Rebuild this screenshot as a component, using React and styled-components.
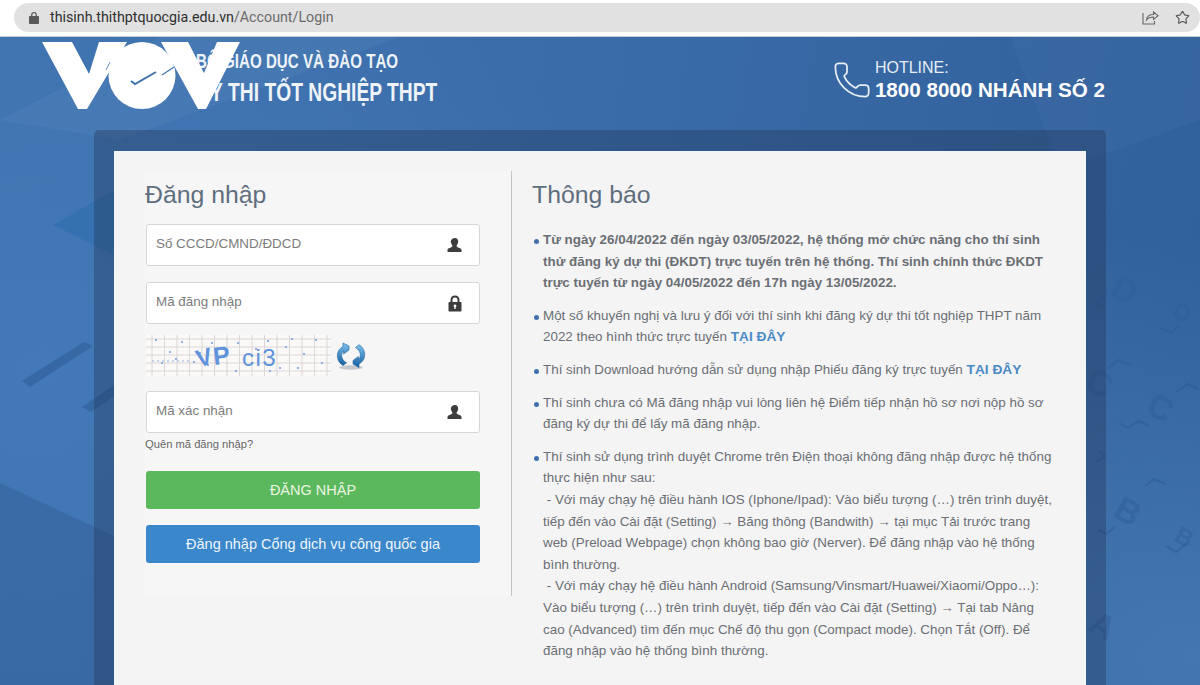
import React from "react";
import styled, { createGlobalStyle } from "styled-components";
import { Phone, Star } from "lucide-react";

const GlobalStyle = createGlobalStyle`
  html, body {
    margin: 0;
    padding: 0;
    height: 100%;
    overflow: hidden;
    font-family: "Liberation Sans", Arial, sans-serif;
  }
  * { box-sizing: border-box; }
`;

const notices = [
  {
    bold: true,
    text: "Từ ngày 26/04/2022 đến ngày 03/05/2022, hệ thống mở chức năng cho thí sinh thử đăng ký dự thi (ĐKDT) trực tuyến trên hệ thống. Thí sinh chính thức ĐKDT trực tuyến từ ngày 04/05/2022 đến 17h ngày 13/05/2022.",
  },
  {
    text: "Một số khuyến nghị và lưu ý đối với thí sinh khi đăng ký dự thi tốt nghiệp THPT năm 2022 theo hình thức trực tuyến ",
    link: "TẠI ĐÂY",
  },
  {
    text: "Thí sinh Download hướng dẫn sử dụng nhập Phiếu đăng ký trực tuyến ",
    link: "TẠI ĐÂY",
  },
  {
    text: "Thí sinh chưa có Mã đăng nhập vui lòng liên hệ Điểm tiếp nhận hồ sơ nơi nộp hồ sơ đăng ký dự thi để lấy mã đăng nhập.",
  },
];

const UserIcon = () => (
  <svg width="16" height="16" viewBox="0 0 16 16">
    <path
      fill="#3c3c3c"
      d="M8 1c2 0 3.200 1.500 3.200 3.600 0 1.500-.7 2.900-1.500 3.600v1.100c0 .6 1 1 2.200 1.500 1.300.5 2.600 1 2.600 2.200V15H.5v-2c0-1.200 1.300-1.700 2.600-2.200 1.200-.5 2.200-.9 2.200-1.500V8.200C4.500 7.500 3.800 6.100 3.800 4.600 3.800 2.500 6 1 8 1z"
    />
  </svg>
);

const LockIcon = () => (
  <svg width="16" height="17" viewBox="0 0 16 17">
    <path
      fill="#3c3c3c"
      fillRule="evenodd"
      d="M8 .5c2.800 0 4.500 1.900 4.500 4.500v2h1c.6 0 1 .4 1 1v7.500c0 .6-.4 1-1 1h-11c-.6 0-1-.4-1-1V8c0-.6.4-1 1-1h1V5C3.500 2.400 5.200.5 8 .5zM8 2.500c-1.600 0-2.500 1-2.500 2.600V7h5V5.100c0-1.600-.9-2.600-2.500-2.600zM8 9.500a1.400 1.400 0 0 0-.7 2.600V14h1.400v-1.900A1.400 1.400 0 0 0 8 9.500z"
    />
  </svg>
);

const BarLockIcon = () => (
  <svg width="10" height="12" viewBox="0 0 10 12">
    <path
      fill="#5a5a5a"
      fillRule="evenodd"
      d="M5 0c1.700 0 2.900 1.200 2.900 2.900V4H9c.5 0 1 .4 1 1v6c0 .6-.5 1-1 1H1c-.5 0-1-.4-1-1V5c0-.6.5-1 1-1h1.100V2.900C2.100 1.200 3.300 0 5 0zm0 1.300c-1 0-1.600.6-1.600 1.600V4h3.200V2.900c0-1-.6-1.600-1.600-1.600z"
    />
  </svg>
);

const ShareIcon = () => (
  <svg width="17" height="15" viewBox="0 0 17 15" fill="none" stroke="#666" strokeWidth="1.100">
    <path d="M1 3v11h11.500v-3" />
    <path d="M4.500 10c.4-3.500 3-5.500 7-5.500V2l4.500 3.700-4.500 3.700V7c-3 0-5.300.8-7 3z" />
  </svg>
);

const RefreshIcon = () => (
  <svg width="30" height="28" viewBox="0 0 30 28">
    <defs>
      <linearGradient id="refreshBlue" x1="0" y1="0" x2="0" y2="1">
        <stop offset="0" stopColor="#7cc0ee" />
        <stop offset="1" stopColor="#14609f" />
      </linearGradient>
    </defs>
    <ellipse cx="15" cy="25.500" rx="12" ry="2.200" fill="#c4c8cc" />
    <path
      fill="url(#refreshBlue)"
      stroke="#1c639f"
      strokeWidth=".6"
      d="M13 4 7 1v3.500C2.600 7 .8 11 1.500 15.500c.5 3.400 2.500 6.300 5.500 8l3.500-2.700C7 19 5.500 16 5.700 13c.1-1.900.8-3.300 1.900-4.300V12L13 8z"
    />
    <path
      fill="url(#refreshBlue)"
      stroke="#1c639f"
      strokeWidth=".6"
      d="M17 22l6 3.500V22c4.400-2.500 6.200-6.500 5.500-11-.5-3.700-2.500-6.600-5.500-8.300L19.500 5.500C23 7.400 24.500 10.500 24.300 13.500c-.1 1.900-.8 3.300-1.900 4.300v-3.300L17 18.500z"
    />
  </svg>
);

const VovLogo = () => (
  <Logo width="200" height="69" viewBox="41 41 200 69">
    <g fill="#fff">
      <polygon points="42,42 72,42 89,74 99,42 127,42 87,109 78,109" />
      <circle cx="142" cy="75.500" r="33.500" />
      <polygon points="161,42 188,42 204,73 217,42 240,42 206,109 198,109" />
    </g>
    <g fill="none" stroke="#3f72ad">
      <path d="M131 81l4 3 21-12" strokeWidth="2" />
      <path d="M162 75l12-8" strokeWidth="1.200" />
      <path d="M110 62l-4 8M108 84l-4 14" strokeWidth=".8" />
    </g>
  </Logo>
);

const dots = [
  [10, 5], [24, 17], [36, 7], [48, 27], [66, 8], [72, 22], [92, 8], [90, 36], [110, 14],
  [122, 6], [128, 25], [146, 4], [152, 33], [158, 19], [170, 5], [176, 28], [140, 12], [30, 24],
  [54, 18], [16, 28], [62, 30], [124, 36], [102, 30], [134, 33],
];

const Captcha = () => (
  <CaptchaBox width="185" height="41" viewBox="0 0 185 41">
    <rect width="185" height="41" fill="#fbf8f8" />
    {[...Array(15).keys()].map((i) => (
      <line key={`v${i}`} x1={6 + i * 12.500} y1="0" x2={6 + i * 12.500} y2="41" stroke="#dcd6d6" />
    ))}
    {[...Array(5).keys()].map((i) => (
      <line key={`h${i}`} x1="0" y1={4 + i * 8} x2="185" y2={4 + i * 8} stroke="#dcd6d6" />
    ))}
    {dots.map(([x, y], i) => (
      <circle key={i} cx={x} cy={y} r="1" fill="#6d9ade" />
    ))}
    <path d="M6 26H46" stroke="#8db0e6" strokeDasharray="2 3" />
    <g fill="#5f93dc" fontFamily="'Liberation Sans', sans-serif">
      <text x="50" y="30" fontSize="24" fontWeight="bold" transform="rotate(-14 60 22)">V</text>
      <text x="67" y="29" fontSize="25" fontWeight="bold" transform="rotate(-6 78 20)">P</text>
      <text x="96" y="31" fontSize="24" letterSpacing="1.500">ci3</text>
    </g>
  </CaptchaBox>
);

const Backdrop = () => (
  <BackdropArt viewBox="0 37 1200 648" preserveAspectRatio="none">
    <polygon points="53,225 114,190 170,170 170,265 114,255" fill="#1d68a6" opacity=".32" />
    <g fill="#27538c" opacity=".42">
      <polygon points="22,381 84,342 93,346 30,387" />
      <polygon points="82,407 150,360 150,372 91,412" />
    </g>
    <polygon points="0,483 114,536 114,685 0,685" fill="#2b5388" opacity=".32" />
    <polygon points="0,120 160,37 400,37 120,140" fill="#7fa3cf" opacity=".12" />
    <polygon points="1010,37 1200,37 1200,120 1060,170" fill="#5f8ac0" opacity=".1" />
    <g fill="none" stroke="#2e5e98" strokeWidth="2" opacity=".6">
      <path d="M1094 303l12-8M1094 303l8 5" />
      <path d="M1160 328l12 5 7-8" />
      <path d="M1108 368l10-8 13 5" />
      <path d="M1128 428l-9-5M1128 428l11-7 10 5" />
      <path d="M1176 392l12-8 10 5" />
      <path d="M1096 462l9-6-5-5" />
      <path d="M1145 486l9-7 12 5" />
      <path d="M1098 530l8 4 9-7" />
      <path d="M1166 546l10 6 10-8" />
    </g>
    <g fill="#2e5e98" opacity=".5" fontFamily="'Liberation Sans', sans-serif" fontWeight="bold">
      <text x="1113" y="303" fontSize="34" transform="rotate(30 1127 290)">D</text>
      <text x="1174" y="322" fontSize="24" transform="rotate(30 1185 312)">D</text>
      <text x="1088" y="396" fontSize="34" transform="rotate(30 1102 382)">C</text>
      <text x="1148" y="420" fontSize="34" transform="rotate(30 1162 408)">C</text>
      <text x="1116" y="524" fontSize="34" transform="rotate(30 1130 511)">B</text>
      <text x="1176" y="546" fontSize="24" transform="rotate(30 1186 537)">B</text>
      <text x="1091" y="638" fontSize="34" transform="rotate(30 1105 625)">A</text>
    </g>
  </BackdropArt>
);

const App = () => {
  return (
    <Screen>
      <GlobalStyle />
      <BrowserBar>
        <UrlPill>
          <BarLockIcon />
          <UrlText>
            thisinh.thithptquocgia.edu.vn<UrlPath>/Account/Login</UrlPath>
          </UrlText>
          <BarActions>
            <ShareIcon />
            <Star size={15} color="#555" strokeWidth={1.8} />
          </BarActions>
        </UrlPill>
      </BrowserBar>
      <Page>
        <Backdrop />
        <VovLogo />
        <Header>
          <Title>
            <TitleSmall>BỘ GIÁO DỤC VÀ ĐÀO TẠO</TitleSmall>
            <TitleBig>KỲ THI TỐT NGHIỆP THPT</TitleBig>
          </Title>
          <Hotline>
            <Phone size={40} strokeWidth={1.050} color="#e8eef6" />
            <HotlineText>
              <HotlineLabel>HOTLINE:</HotlineLabel>
              <HotlineNumber>1800 8000 NHÁNH SỐ 2</HotlineNumber>
            </HotlineText>
          </Hotline>
        </Header>
        <Panel>
          <Card>
            <LoginColumn>
              <Heading>Đăng nhập</Heading>
              <Field>
                <Input placeholder="Số CCCD/CMND/ĐDCD" />
                <FieldIcon><UserIcon /></FieldIcon>
              </Field>
              <Field>
                <Input placeholder="Mã đăng nhập" />
                <FieldIcon><LockIcon /></FieldIcon>
              </Field>
              <CaptchaRow>
                <Captcha />
                <RefreshIcon />
              </CaptchaRow>
              <Field>
                <Input placeholder="Mã xác nhận" />
                <FieldIcon><UserIcon /></FieldIcon>
              </Field>
              <Forgot>Quên mã đăng nhập?</Forgot>
              <ActionButton $bg="#5cb85c" $color="#e9f6e4">ĐĂNG NHẬP</ActionButton>
              <ActionButton $bg="#3a87cb" $color="#eef5fb">Đăng nhập Cổng dịch vụ công quốc gia</ActionButton>
            </LoginColumn>
            <NoticeColumn>
              <Heading>Thông báo</Heading>
              <NoticeList>
                {notices.map((n, i) => (
                  <NoticeItem key={i} $bold={n.bold}>
                    {n.text}
                    {n.link && <NoticeLink>{n.link}</NoticeLink>}
                  </NoticeItem>
                ))}
                <NoticeItem>
                  Thí sinh sử dụng trình duyệt Chrome trên Điện thoại không đăng nhập được hệ thống thực hiện như sau:
                  <br />
                  &nbsp;- Với máy chạy hệ điều hành IOS (Iphone/Ipad): Vào biểu tượng (…) trên trình duyệt, tiếp đến vào Cài đặt (Setting) → Băng thông (Bandwith) → tại mục Tải trước trang web (Preload Webpage) chọn không bao giờ (Nerver). Để đăng nhập vào hệ thống bình thường.
                  <br />
                  &nbsp;- Với máy chạy hệ điều hành Android (Samsung/Vinsmart/Huawei/Xiaomi/Oppo…): Vào biểu tượng (…) trên trình duyệt, tiếp đến vào Cài đặt (Setting) → Tại tab Nâng cao (Advanced) tìm đến mục Chế độ thu gọn (Compact mode). Chọn Tắt (Off). Để đăng nhập vào hệ thống bình thường.
                </NoticeItem>
              </NoticeList>
            </NoticeColumn>
          </Card>
        </Panel>
      </Page>
    </Screen>
  );
};

export default App;

const Screen = styled.div`
  width: 1200px;
  height: 685px;
  display: flex;
  flex-direction: column;
  overflow: hidden;
`;

const BrowserBar = styled.div`
  height: 37px;
  flex-shrink: 0;
  padding: 3px 0 4px 14px;
  background: #fff;
  border-bottom: 1px solid #c8ccd0;
`;

const UrlPill = styled.div`
  height: 29px;
  display: flex;
  align-items: center;
  gap: 11px;
  padding: 0 10px 0 15px;
  background: #e1e1e1;
  border-radius: 15px;
`;

const UrlText = styled.span`
  flex: 1;
  margin-top: -1px;
  font-family: "Roboto", "Liberation Sans", sans-serif;
  font-size: 14.250px;
  color: #2f2f2f;
`;

const UrlPath = styled.span`
  color: #6b6b6b;
`;

const BarActions = styled.div`
  display: flex;
  align-items: center;
  gap: 16px;
`;

const Page = styled.div`
  flex: 1;
  position: relative;
  min-height: 0;
  display: flex;
  flex-direction: column;
  overflow: hidden;
  background:
    radial-gradient(700px 420px at 1200px 620px, #4477b1 0%, rgba(68, 119, 177, 0) 100%),
    radial-gradient(600px 500px at 40px 330px, #4379b8 0%, rgba(67, 121, 184, 0) 100%),
    linear-gradient(100deg, #3f72ad 0%, #3a6ca9 45%, #305f99 100%);
`;

const BackdropArt = styled.svg`
  position: absolute;
  inset: 0;
  width: 100%;
  height: 100%;
`;

const Logo = styled.svg`
  position: absolute;
  left: 41px;
  top: 4px;
  z-index: 2;
`;

const Header = styled.header`
  position: relative;
  height: 93px;
  flex-shrink: 0;
  display: flex;
  justify-content: space-between;
  padding: 12px 95px 0 196px;
`;

/* no condensed face is installed, so the title is narrowed by hand */
const Title = styled.div`
  width: 243px;
  color: #eef3f9;
  font-weight: bold;
  white-space: nowrap;
  transform: scaleX(0.77);
  transform-origin: left top;
`;

const TitleSmall = styled.div`
  font-size: 19.700px;
  line-height: 24px;
`;

const TitleBig = styled.div`
  font-size: 25px;
  line-height: 32px;
  margin-top: 3px;
`;

const Hotline = styled.div`
  display: flex;
  align-items: flex-start;
  gap: 3px;
  padding-top: 11px;
`;

const HotlineText = styled.div`
  color: #fff;
  white-space: nowrap;
  padding-top: 1px;
`;

const HotlineLabel = styled.div`
  font-size: 16px;
  line-height: 18px;
  margin-top: -2px;
  color: #e8eef6;
`;

const HotlineNumber = styled.div`
  font-size: 20.600px;
  line-height: 26px;
  font-weight: bold;
`;

const Panel = styled.div`
  position: relative;
  flex: 1;
  margin: 0 94px;
  padding: 21px 20px 0;
  background: rgba(32, 52, 84, 0.36);
  border-radius: 5px 5px 0 0;
`;

const Card = styled.div`
  height: 100%;
  display: flex;
  align-items: flex-start;
  padding: 20px 0 0 31px;
  background: #f4f4f4;
`;

const LoginColumn = styled.div`
  width: 367px;
  height: 425px;
  flex-shrink: 0;
  display: flex;
  flex-direction: column;
  padding: 0 31px 0 1px;
  background: #f6f6f6;
  border-right: 1px solid #c4c4c4;
`;

const Heading = styled.h2`
  margin: 0 0 0 -1px;
  height: 53px;
  font-size: 24.800px;
  line-height: 48px;
  font-weight: normal;
  color: #5f6e7e;
`;

const Field = styled.div`
  position: relative;
  margin-bottom: 16px;
`;

const Input = styled.input`
  width: 100%;
  height: 42px;
  padding: 0 36px 3px 9px;
  font-family: inherit;
  font-size: 13.400px;
  background: #fff;
  border: 1px solid #d6d6d6;
  border-radius: 3px;
  outline: none;
  &::placeholder {
    color: #7c7c7c;
    opacity: 1;
  }
`;

const FieldIcon = styled.span`
  position: absolute;
  right: 17px;
  top: 13px;
  line-height: 0;
`;

const CaptchaRow = styled.div`
  display: flex;
  align-items: center;
  gap: 5px;
  margin: -5px 0 15px;
`;

const CaptchaBox = styled.svg`
  display: block;
`;

const Forgot = styled.div`
  margin: -12px 0 20px -1px;
  font-size: 11.200px;
  line-height: 14px;
  color: #666;
`;

const ActionButton = styled.button`
  height: 38px;
  margin-bottom: 16px;
  font-family: inherit;
  font-size: 14.500px;
  color: ${(p) => p.$color};
  background: ${(p) => p.$bg};
  border: none;
  border-radius: 3px;
`;

const NoticeColumn = styled.div`
  width: 542px;
  padding-left: 21px;
`;

const NoticeList = styled.ul`
  margin: 0;
  padding: 5px 0 0 10px;
  width: 521px;
  list-style: none;
`;

const NoticeItem = styled.li`
  position: relative;
  margin-bottom: 11px;
  font-size: 13.400px;
  line-height: 21.600px;
  color: #6b6f74;
  font-weight: ${(p) => (p.$bold ? "bold" : "normal")};
  &::before {
    content: "";
    position: absolute;
    left: -9px;
    top: 10px;
    width: 5px;
    height: 5px;
    border-radius: 50%;
    background: #3f6fae;
  }
`;

const NoticeLink = styled.a`
  font-size: 13.700px;
  line-height: 1;
  font-weight: bold;
  color: #4a8ac6;
`;
